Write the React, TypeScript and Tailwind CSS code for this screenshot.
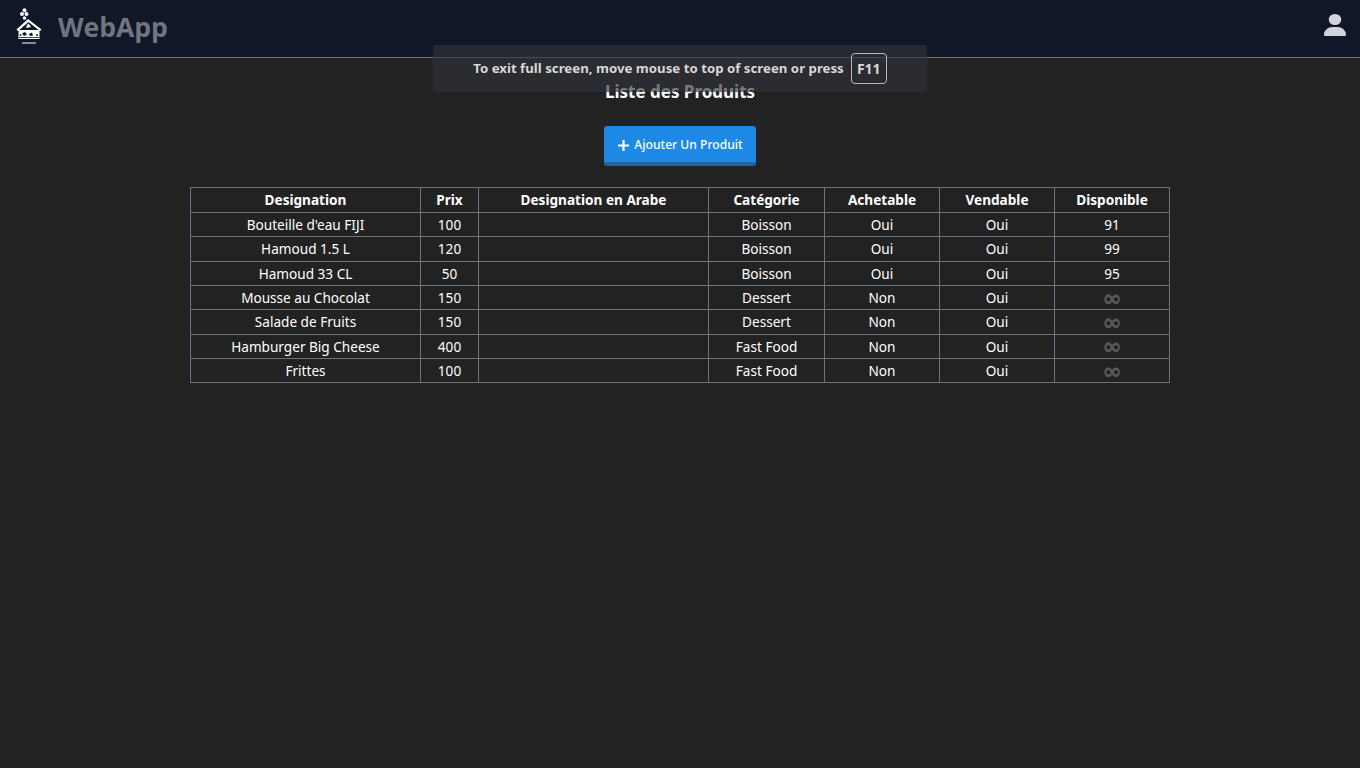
import React from "react";

const cols = ["w-[230px]", "w-[58px]", "w-[230px]", "w-[116px]", "w-[115px]", "w-[115px]", "w-[115px]"];
const heads = ["Designation", "Prix", "Designation en Arabe", "Catégorie", "Achetable", "Vendable", "Disponible"];
const rows = [
  ["Bouteille d'eau FIJI", "100", "", "Boisson", "Oui", "Oui", "91"],
  ["Hamoud 1.5 L", "120", "", "Boisson", "Oui", "Oui", "99"],
  ["Hamoud 33 CL", "50", "", "Boisson", "Oui", "Oui", "95"],
  ["Mousse au Chocolat", "150", "", "Dessert", "Non", "Oui", "∞"],
  ["Salade de Fruits", "150", "", "Dessert", "Non", "Oui", "∞"],
  ["Hamburger Big Cheese", "400", "", "Fast Food", "Non", "Oui", "∞"],
  ["Frittes", "100", "", "Fast Food", "Non", "Oui", "∞"],
];

function Logo() {
  return (
    <svg width="26" height="37" viewBox="0 0 26 37" fill="#fff" className="mt-[2px]">
      <circle cx="8.5" cy="2.2" r="2" />
      <circle cx="6" cy="6" r="2" />
      <circle cx="10.5" cy="6" r="2" />
      <circle cx="8.5" cy="10" r="1.8" />
      <path d="M12 11 L25.5 21.5 L24 23 L12.5 14 L2 23 L0.5 21.5 Z" />
      <path d="M11 17 L12.5 15.5 L15 19 L10 20 Z" />
      <path d="M2.5 22 H23.5 V31 H2.5 Z" />
      <path d="M6 25.5 L9 24 L11 26.5 L8 28 Z" fill="#0f172a" />
      <path d="M13 26 L16 24.5 L17 27.5 L14 28 Z" fill="#0f172a" />
      <circle cx="4.5" cy="27" r="0.9" fill="#0f172a" />
      <circle cx="21" cy="27" r="1" fill="#0f172a" />
      <rect x="3" y="29" width="20" height="0.8" fill="#0f172a" />
      <rect x="6" y="34.5" width="14" height="1" />
    </svg>
  );
}

function UserIcon() {
  return (
    <svg width="22" height="22" viewBox="0 0 448 512" fill="#d1d5db" preserveAspectRatio="none">
      <path d="M224 256A128 128 0 1 0 224 0a128 128 0 1 0 0 256zm-45.7 48C79.8 304 0 383.8 0 482.3C0 498.7 13.3 512 29.7 512H418.3c16.4 0 29.7-13.3 29.7-29.7C448 383.8 368.2 304 269.7 304H178.3z" />
    </svg>
  );
}

export default function App() {
  return (
    <div className="relative min-h-[768px] bg-[#222222] text-white font-['Noto_Sans','Open_Sans',sans-serif]">
      <header className="h-[58px] bg-[#101828] border-b border-[#6b7280] flex items-center justify-between pl-[16px] pr-[14px] pb-[7px]">
        <div className="flex items-center gap-[16px]">
          <Logo />
          <span className="text-[26.5px] leading-none font-bold text-[#70757f] font-['Open_Sans',sans-serif] mt-[4px]">WebApp</span>
        </div>
        <UserIcon />
      </header>

      <div className="absolute left-[433px] top-[45px] w-[494px] h-[47px] rounded-[4px] bg-[#30323a]/65 flex items-center justify-center gap-[7px] z-10">
        <span className="text-[13.25px] font-bold text-[#d8d8d8]">To exit full screen, move mouse to top of screen or press</span>
        <span className="w-[36px] h-[31px] border border-[#b8b8b8] rounded-[4px] flex items-center justify-center text-[14px] font-bold text-[#d8d8d8]">F11</span>
      </div>

      <main className="flex flex-col items-center">
        <h1 className="mt-[23px] h-[22px] leading-[22px] text-[17px] font-bold text-white">Liste des Produits</h1>
        <button className="mt-[23px] w-[152px] h-[40px] pt-[2px] pl-[1px] rounded-[3px] bg-[#1e88e5] border-b-[4px] border-[#1a66a8] flex items-center justify-center gap-[5px] text-[12.1px] font-medium text-white">
          <svg width="11" height="11" viewBox="0 0 11 11" fill="none" stroke="#fff" strokeWidth="2.2">
            <path d="M5.5 0V11M0 5.5H11" />
          </svg>
          Ajouter Un Produit
        </button>
        <table className="mt-[21px] w-[979px] table-fixed border-collapse text-[13.6px] text-white">
          <colgroup>
            {cols.map((c, i) => (
              <col key={i} className={c} />
            ))}
          </colgroup>
          <thead>
            <tr>
              {heads.map((h) => (
                <th key={h} className="h-[25px] p-0 border border-[#6b7280] font-bold text-center leading-none">{h}</th>
              ))}
            </tr>
          </thead>
          <tbody>
            {rows.map((r) => (
              <tr key={r[0]}>
                {r.map((v, i) => (
                  <td
                    key={i}
                    className={
                      v === "∞"
                        ? "h-[24.35px] p-0 border border-[#6b7280] text-center leading-[14px] text-[23px] font-bold text-[#5a5a5a] [-webkit-text-stroke:0.3px_#5a5a5a] font-['DejaVu_Sans',sans-serif]"
                        : "h-[24.35px] p-0 border border-[#6b7280] text-center leading-none"
                    }
                  >
                    {v}
                  </td>
                ))}
              </tr>
            ))}
          </tbody>
        </table>
      </main>
    </div>
  );
}
